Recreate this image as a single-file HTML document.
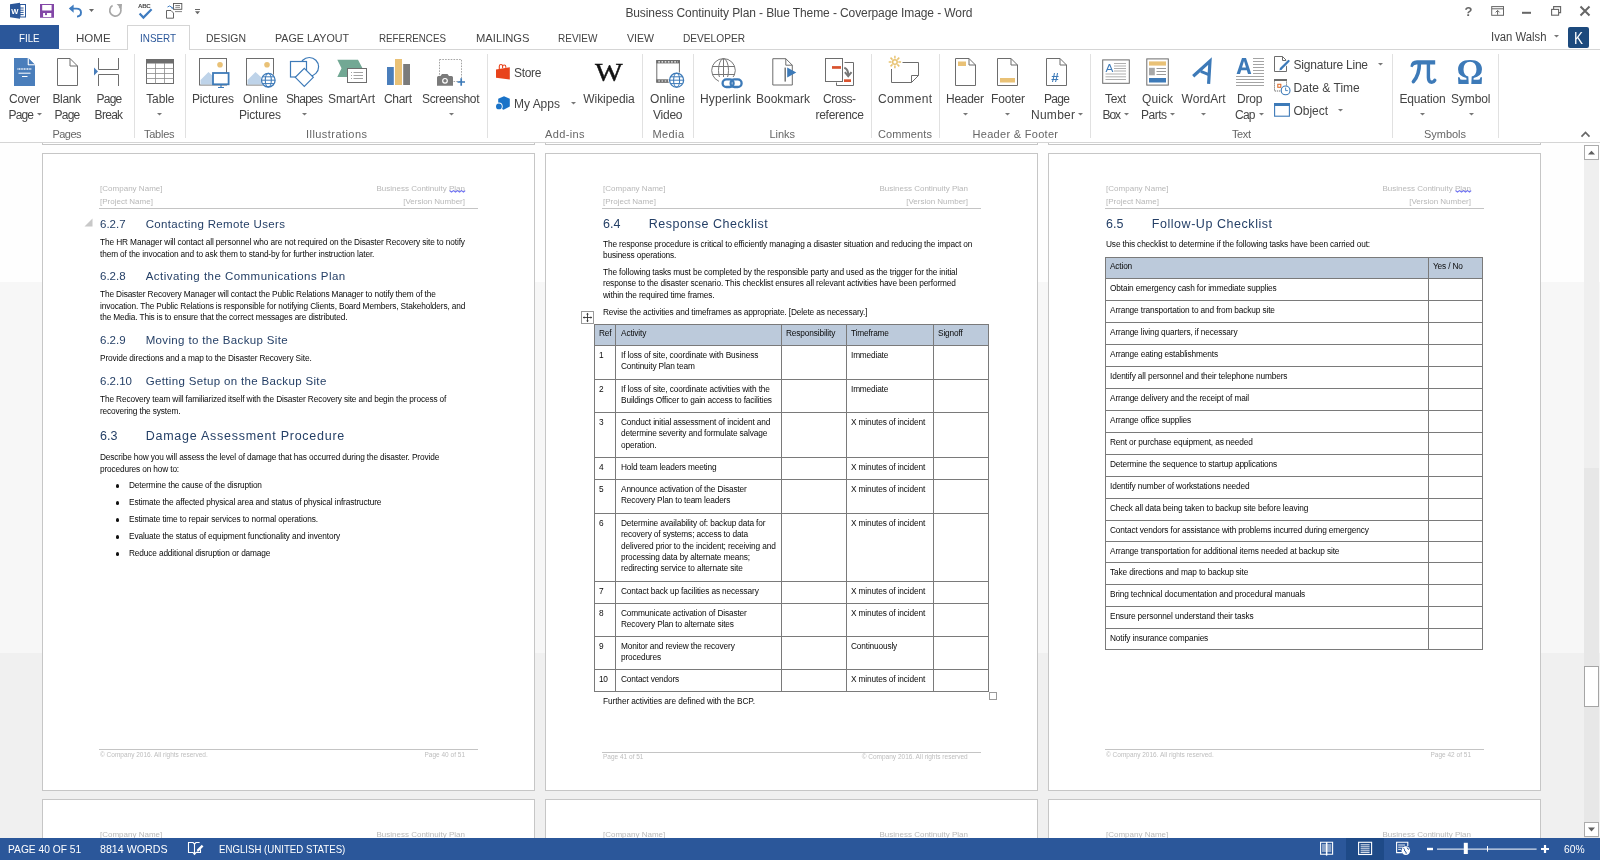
<!DOCTYPE html>
<html><head><meta charset="utf-8"><style>
html,body{margin:0;padding:0}
body{width:1600px;height:860px;position:relative;overflow:hidden;background:#fff;font-family:"Liberation Sans",sans-serif}
.t{position:absolute;white-space:pre;line-height:1;font-family:"Liberation Sans",sans-serif}
.b{position:absolute}
svg.b{overflow:visible}
</style></head><body><div id=root style="position:absolute;left:0;top:0;width:1600px;height:860px;will-change:transform">
<div class=t style="left:625.40px;top:7.00px;font-size:12px;color:#444444;letter-spacing:-0.098px;">Business Continuity Plan - Blue Theme - Coverpage Image - Word</div>
<div class=b style="left:0px;top:25px;width:59px;height:24px;background:#2b579a;"></div>
<div class=t style="left:19.40px;top:32.70px;font-size:11.5px;color:#ffffff;transform:scaleX(0.8482);transform-origin:0 0;">FILE</div>
<div class=t style="left:76.40px;top:32.70px;font-size:11.5px;color:#444444;transform:scaleX(1.0029);transform-origin:0 0;">HOME</div>
<div class=t style="left:206.00px;top:32.70px;font-size:11.5px;color:#444444;transform:scaleX(0.9072);transform-origin:0 0;">DESIGN</div>
<div class=t style="left:275.00px;top:32.70px;font-size:11.5px;color:#444444;transform:scaleX(0.9313);transform-origin:0 0;">PAGE LAYOUT</div>
<div class=t style="left:379.00px;top:32.70px;font-size:11.5px;color:#444444;transform:scaleX(0.8525);transform-origin:0 0;">REFERENCES</div>
<div class=t style="left:475.50px;top:32.70px;font-size:11.5px;color:#444444;transform:scaleX(0.9735);transform-origin:0 0;">MAILINGS</div>
<div class=t style="left:558.00px;top:32.70px;font-size:11.5px;color:#444444;transform:scaleX(0.8707);transform-origin:0 0;">REVIEW</div>
<div class=t style="left:627.00px;top:32.70px;font-size:11.5px;color:#444444;transform:scaleX(0.9187);transform-origin:0 0;">VIEW</div>
<div class=t style="left:683.00px;top:32.70px;font-size:11.5px;color:#444444;transform:scaleX(0.8819);transform-origin:0 0;">DEVELOPER</div>
<div class=b style="left:59px;top:49px;width:1541px;height:1px;background:#d5d5d5;"></div>
<div class=b style="left:127px;top:25px;width:63px;height:25px;background:#fff;border:1px solid #d5d5d5;border-bottom:none;box-sizing:border-box"></div>
<div class=t style="left:140.40px;top:32.70px;font-size:11.5px;color:#2b579a;transform:scaleX(0.8603);transform-origin:0 0;">INSERT</div>
<div class=t style="left:1490.80px;top:30.80px;font-size:12px;color:#444444;transform:scaleX(0.9421);transform-origin:0 0;">Ivan Walsh</div>
<svg class=b style="left:1554.10px;top:34.00px" width="5" height="3.5"><path d="M0 1 L5 1 L2.5 3.5 Z" fill="#777"/></svg>
<div class=b style="left:1567.6px;top:27px;width:21.3px;height:20.6px;background:#1d4a7d;border-radius:2px"></div>
<div class=t style="left:1573.70px;top:29.60px;font-size:16.5px;color:#ffffff;transform:scaleX(0.8178);transform-origin:0 0;">K</div>
<div class=b style="left:0px;top:142px;width:1600px;height:1px;background:#d5d5d5;"></div>
<div class=b style="left:134px;top:54px;width:1px;height:84px;background:#e1e1e1;"></div>
<div class=b style="left:185px;top:54px;width:1px;height:84px;background:#e1e1e1;"></div>
<div class=b style="left:487px;top:54px;width:1px;height:84px;background:#e1e1e1;"></div>
<div class=b style="left:642px;top:54px;width:1px;height:84px;background:#e1e1e1;"></div>
<div class=b style="left:693px;top:54px;width:1px;height:84px;background:#e1e1e1;"></div>
<div class=b style="left:871px;top:54px;width:1px;height:84px;background:#e1e1e1;"></div>
<div class=b style="left:939px;top:54px;width:1px;height:84px;background:#e1e1e1;"></div>
<div class=b style="left:1090px;top:54px;width:1px;height:84px;background:#e1e1e1;"></div>
<div class=b style="left:1392px;top:54px;width:1px;height:84px;background:#e1e1e1;"></div>
<div class=b style="left:1498px;top:54px;width:1px;height:84px;background:#e1e1e1;"></div>
<div class=t style="left:9.00px;top:93.00px;font-size:12px;color:#444444;letter-spacing:-0.252px;">Cover</div>
<div class=t style="left:8.50px;top:109.00px;font-size:12px;color:#444444;letter-spacing:-0.842px;">Page</div>
<svg class=b style="left:37.20px;top:112.00px" width="5" height="3.5"><path d="M0 1 L5 1 L2.5 3.5 Z" fill="#777777"/></svg>
<div class=t style="left:52.50px;top:93.00px;font-size:12px;color:#444444;letter-spacing:-0.379px;">Blank</div>
<div class=t style="left:54.60px;top:109.00px;font-size:12px;color:#444444;letter-spacing:-0.792px;">Page</div>
<div class=t style="left:96.50px;top:93.00px;font-size:12px;color:#444444;letter-spacing:-0.758px;">Page</div>
<div class=t style="left:94.60px;top:109.00px;font-size:12px;color:#444444;letter-spacing:-0.712px;">Break</div>
<div class=t style="left:146.25px;top:93.00px;font-size:12px;color:#444444;letter-spacing:-0.134px;">Table</div>
<svg class=b style="left:156.90px;top:112.00px" width="5" height="3.5"><path d="M0 1 L5 1 L2.5 3.5 Z" fill="#777777"/></svg>
<div class=t style="left:192.00px;top:93.00px;font-size:12px;color:#444444;letter-spacing:-0.193px;">Pictures</div>
<div class=t style="left:243.00px;top:93.00px;font-size:12px;color:#444444;letter-spacing:0.062px;">Online</div>
<div class=t style="left:239.00px;top:109.00px;font-size:12px;color:#444444;letter-spacing:-0.193px;">Pictures</div>
<div class=t style="left:286.00px;top:93.00px;font-size:12px;color:#444444;letter-spacing:-0.740px;">Shapes</div>
<svg class=b style="left:302.00px;top:112.00px" width="5" height="3.5"><path d="M0 1 L5 1 L2.5 3.5 Z" fill="#777777"/></svg>
<div class=t style="left:328.00px;top:93.00px;font-size:12px;color:#444444;letter-spacing:-0.048px;">SmartArt</div>
<div class=t style="left:384.00px;top:93.00px;font-size:12px;color:#444444;letter-spacing:-0.336px;">Chart</div>
<div class=t style="left:422.00px;top:93.00px;font-size:12px;color:#444444;letter-spacing:-0.356px;">Screenshot</div>
<svg class=b style="left:448.70px;top:112.00px" width="5" height="3.5"><path d="M0 1 L5 1 L2.5 3.5 Z" fill="#777777"/></svg>
<div class=t style="left:514.00px;top:66.90px;font-size:12px;color:#444444;letter-spacing:-0.345px;">Store</div>
<div class=t style="left:514.00px;top:97.70px;font-size:12px;color:#444444;letter-spacing:-0.014px;">My Apps</div>
<svg class=b style="left:571.00px;top:101.00px" width="5" height="3.5"><path d="M0 1 L5 1 L2.5 3.5 Z" fill="#777777"/></svg>
<div class=t style="left:583.30px;top:93.00px;font-size:12px;color:#444444;letter-spacing:-0.065px;">Wikipedia</div>
<div class=t style="left:650.00px;top:93.00px;font-size:12px;color:#444444;letter-spacing:0.062px;">Online</div>
<div class=t style="left:653.00px;top:109.00px;font-size:12px;color:#444444;letter-spacing:-0.244px;">Video</div>
<div class=t style="left:700.00px;top:93.00px;font-size:12px;color:#444444;letter-spacing:0.123px;">Hyperlink</div>
<div class=t style="left:756.00px;top:93.00px;font-size:12px;color:#444444;letter-spacing:-0.003px;">Bookmark</div>
<div class=t style="left:823.00px;top:93.00px;font-size:12px;color:#444444;letter-spacing:-0.466px;">Cross-</div>
<div class=t style="left:815.50px;top:109.00px;font-size:12px;color:#444444;letter-spacing:-0.274px;">reference</div>
<div class=t style="left:878.00px;top:93.00px;font-size:12px;color:#444444;letter-spacing:0.331px;">Comment</div>
<div class=t style="left:946.00px;top:93.00px;font-size:12px;color:#444444;letter-spacing:-0.271px;">Header</div>
<svg class=b style="left:962.50px;top:112.00px" width="5" height="3.5"><path d="M0 1 L5 1 L2.5 3.5 Z" fill="#777777"/></svg>
<div class=t style="left:991.00px;top:93.00px;font-size:12px;color:#444444;letter-spacing:-0.136px;">Footer</div>
<svg class=b style="left:1005.00px;top:112.00px" width="5" height="3.5"><path d="M0 1 L5 1 L2.5 3.5 Z" fill="#777777"/></svg>
<div class=t style="left:1044.00px;top:93.00px;font-size:12px;color:#444444;letter-spacing:-0.675px;">Page</div>
<div class=t style="left:1031.00px;top:109.00px;font-size:12px;color:#444444;letter-spacing:0.264px;">Number</div>
<svg class=b style="left:1077.70px;top:112.00px" width="5" height="3.5"><path d="M0 1 L5 1 L2.5 3.5 Z" fill="#777777"/></svg>
<div class=t style="left:1105.00px;top:93.00px;font-size:12px;color:#444444;letter-spacing:-0.336px;">Text</div>
<div class=t style="left:1102.50px;top:109.00px;font-size:12px;color:#444444;letter-spacing:-1.089px;">Box</div>
<svg class=b style="left:1124.00px;top:112.00px" width="5" height="3.5"><path d="M0 1 L5 1 L2.5 3.5 Z" fill="#777777"/></svg>
<div class=t style="left:1142.00px;top:93.00px;font-size:12px;color:#444444;letter-spacing:0.082px;">Quick</div>
<div class=t style="left:1141.00px;top:109.00px;font-size:12px;color:#444444;letter-spacing:-0.502px;">Parts</div>
<svg class=b style="left:1170.00px;top:112.00px" width="5" height="3.5"><path d="M0 1 L5 1 L2.5 3.5 Z" fill="#777777"/></svg>
<div class=t style="left:1181.60px;top:93.00px;font-size:12px;color:#444444;letter-spacing:0.035px;">WordArt</div>
<svg class=b style="left:1200.90px;top:112.00px" width="5" height="3.5"><path d="M0 1 L5 1 L2.5 3.5 Z" fill="#777777"/></svg>
<div class=t style="left:1237.00px;top:93.00px;font-size:12px;color:#444444;letter-spacing:-0.170px;">Drop</div>
<div class=t style="left:1235.00px;top:109.00px;font-size:12px;color:#444444;letter-spacing:-0.757px;">Cap</div>
<svg class=b style="left:1259.00px;top:112.00px" width="5" height="3.5"><path d="M0 1 L5 1 L2.5 3.5 Z" fill="#777777"/></svg>
<div class=t style="left:1293.60px;top:59.00px;font-size:12px;color:#444444;letter-spacing:-0.230px;">Signature Line</div>
<svg class=b style="left:1377.50px;top:62.00px" width="5" height="3.5"><path d="M0 1 L5 1 L2.5 3.5 Z" fill="#777777"/></svg>
<div class=t style="left:1293.60px;top:82.00px;font-size:12px;color:#444444;letter-spacing:0.016px;">Date &amp; Time</div>
<div class=t style="left:1293.60px;top:105.00px;font-size:12px;color:#444444;letter-spacing:-0.056px;">Object</div>
<svg class=b style="left:1338.00px;top:107.50px" width="5" height="3.5"><path d="M0 1 L5 1 L2.5 3.5 Z" fill="#777777"/></svg>
<div class=t style="left:1399.40px;top:93.00px;font-size:12px;color:#444444;letter-spacing:-0.168px;">Equation</div>
<svg class=b style="left:1419.50px;top:112.00px" width="5" height="3.5"><path d="M0 1 L5 1 L2.5 3.5 Z" fill="#777777"/></svg>
<div class=t style="left:1451.00px;top:93.00px;font-size:12px;color:#444444;letter-spacing:-0.123px;">Symbol</div>
<svg class=b style="left:1468.50px;top:112.00px" width="5" height="3.5"><path d="M0 1 L5 1 L2.5 3.5 Z" fill="#777777"/></svg>
<div class=t style="left:52.50px;top:129.00px;font-size:11px;color:#666666;letter-spacing:-0.547px;">Pages</div>
<div class=t style="left:144.00px;top:129.00px;font-size:11px;color:#666666;letter-spacing:-0.259px;">Tables</div>
<div class=t style="left:306.00px;top:129.00px;font-size:11px;color:#666666;letter-spacing:0.447px;">Illustrations</div>
<div class=t style="left:545.00px;top:129.00px;font-size:11px;color:#666666;letter-spacing:0.367px;">Add-ins</div>
<div class=t style="left:652.50px;top:129.00px;font-size:11px;color:#666666;letter-spacing:0.385px;">Media</div>
<div class=t style="left:769.50px;top:129.00px;font-size:11px;color:#666666;letter-spacing:-0.045px;">Links</div>
<div class=t style="left:878.00px;top:129.00px;font-size:11px;color:#666666;letter-spacing:0.117px;">Comments</div>
<div class=t style="left:972.50px;top:129.00px;font-size:11px;color:#666666;letter-spacing:0.299px;">Header &amp; Footer</div>
<div class=t style="left:1232.00px;top:129.00px;font-size:11px;color:#666666;letter-spacing:-0.391px;">Text</div>
<div class=t style="left:1424.00px;top:129.00px;font-size:11px;color:#666666;letter-spacing:-0.030px;">Symbols</div>
<div class=b style="left:0px;top:143px;width:1600px;height:139px;background:#fefefe;"></div>
<div class=b style="left:0px;top:282px;width:1600px;height:371px;background:#f7f7f7;"></div>
<div class=b style="left:0px;top:653px;width:1600px;height:185px;background:#f0f0f0;"></div>
<div class=b style="left:1584px;top:145px;width:15px;height:323px;background:#efefef;"></div>
<div class=b style="left:1584px;top:468px;width:15px;height:370px;background:#e7e7e7;"></div>
<div class=b style="left:42px;top:143px;width:493px;height:2px;background:#fff;border:1px solid #c6c6c6;border-top:none;box-sizing:border-box"></div>
<div class=b style="left:42px;top:153px;width:493px;height:638px;background:#fff;border:1px solid #c6c6c6;box-sizing:border-box"></div>
<div class=b style="left:42px;top:799px;width:493px;height:60px;background:#fff;border:1px solid #c6c6c6;border-bottom:none;box-sizing:border-box"></div>
<div class=b style="left:545px;top:143px;width:493px;height:2px;background:#fff;border:1px solid #c6c6c6;border-top:none;box-sizing:border-box"></div>
<div class=b style="left:545px;top:153px;width:493px;height:638px;background:#fff;border:1px solid #c6c6c6;box-sizing:border-box"></div>
<div class=b style="left:545px;top:799px;width:493px;height:60px;background:#fff;border:1px solid #c6c6c6;border-bottom:none;box-sizing:border-box"></div>
<div class=b style="left:1048px;top:143px;width:493px;height:2px;background:#fff;border:1px solid #c6c6c6;border-top:none;box-sizing:border-box"></div>
<div class=b style="left:1048px;top:153px;width:493px;height:638px;background:#fff;border:1px solid #c6c6c6;box-sizing:border-box"></div>
<div class=b style="left:1048px;top:799px;width:493px;height:60px;background:#fff;border:1px solid #c6c6c6;border-bottom:none;box-sizing:border-box"></div>
<div class=t style="left:100.00px;top:185.00px;font-size:8px;color:#b8b8b8;letter-spacing:0.020px;">[Company Name]</div>
<div class=t style="left:100.00px;top:198.00px;font-size:8px;color:#b8b8b8;">[Project Name]</div>
<div class=t style="left:376.50px;top:185.00px;font-size:8px;color:#b8b8b8;">Business Continuity Plan</div>
<div class=t style="left:403.20px;top:198.00px;font-size:8px;color:#b8b8b8;">[Version Number]</div>
<div class=b style="left:99px;top:208px;width:379px;height:1px;background:#c4c4c4;"></div>
<svg class=b style="left:449px;top:190.2px" width="17" height="3"><path d="M0.5 0.6 L2.5 2 L4.5 0.6 L6.5 2 L8.5 0.6 L10.5 2 L12.5 0.6 L14.5 2 L16.2 0.6" stroke="#6f72f2" stroke-width="1.1" fill="none"/></svg>
<svg class=b style="left:84px;top:218px" width="9" height="9"><path d="M8.5 0.5 L8.5 8.5 L0.5 8.5 Z" fill="#c8c8c8"/></svg>
<div class=t style="left:100.00px;top:219.00px;font-size:11.5px;color:#243f66;">6.2.7</div>
<div class=t style="left:145.70px;top:219.00px;font-size:11.5px;color:#243f66;letter-spacing:0.347px;">Contacting Remote Users</div>
<div class=t style="left:100.00px;top:238.00px;font-size:8.3px;color:#0a0a0a;letter-spacing:-0.112px;">The HR Manager will contact all personnel who are not required on the Disaster Recovery site to notify</div>
<div class=t style="left:100.00px;top:250.00px;font-size:8.3px;color:#0a0a0a;letter-spacing:-0.127px;">them of the invocation and to ask them to stand-by for further instruction later.</div>
<div class=t style="left:100.00px;top:271.00px;font-size:11.5px;color:#243f66;">6.2.8</div>
<div class=t style="left:145.70px;top:271.00px;font-size:11.5px;color:#243f66;letter-spacing:0.467px;">Activating the Communications Plan</div>
<div class=t style="left:100.00px;top:290.00px;font-size:8.3px;color:#0a0a0a;letter-spacing:-0.135px;">The Disaster Recovery Manager will contact the Public Relations Manager to notify them of the</div>
<div class=t style="left:100.00px;top:302.00px;font-size:8.3px;color:#0a0a0a;letter-spacing:-0.133px;">invocation. The Public Relations is responsible for notifying Clients, Board Members, Stakeholders, and</div>
<div class=t style="left:100.00px;top:313.00px;font-size:8.3px;color:#0a0a0a;letter-spacing:-0.131px;">the Media. This is to ensure that the correct messages are distributed.</div>
<div class=t style="left:100.00px;top:335.00px;font-size:11.5px;color:#243f66;">6.2.9</div>
<div class=t style="left:145.70px;top:335.00px;font-size:11.5px;color:#243f66;letter-spacing:0.350px;">Moving to the Backup Site</div>
<div class=t style="left:100.00px;top:354.00px;font-size:8.3px;color:#0a0a0a;letter-spacing:-0.135px;">Provide directions and a map to the Disaster Recovery Site.</div>
<div class=t style="left:100.00px;top:376.00px;font-size:11.5px;color:#243f66;">6.2.10</div>
<div class=t style="left:145.70px;top:376.00px;font-size:11.5px;color:#243f66;letter-spacing:0.340px;">Getting Setup on the Backup Site</div>
<div class=t style="left:100.00px;top:395.00px;font-size:8.3px;color:#0a0a0a;letter-spacing:-0.131px;">The Recovery team will familiarized itself with the Disaster Recovery site and begin the process of</div>
<div class=t style="left:100.00px;top:407.00px;font-size:8.3px;color:#0a0a0a;letter-spacing:-0.142px;">recovering the system.</div>
<div class=t style="left:100.00px;top:430.00px;font-size:12.5px;color:#243f66;">6.3</div>
<div class=t style="left:145.70px;top:430.00px;font-size:12.5px;color:#243f66;letter-spacing:0.744px;">Damage Assessment Procedure</div>
<div class=t style="left:100.00px;top:453.00px;font-size:8.3px;color:#0a0a0a;letter-spacing:-0.134px;">Describe how you will assess the level of damage that has occurred during the disaster. Provide</div>
<div class=t style="left:100.00px;top:465.00px;font-size:8.3px;color:#0a0a0a;letter-spacing:-0.147px;">procedures on how to:</div>
<div class=b style="left:115.6px;top:484.4px;width:3.2px;height:3.2px;border-radius:50%;background:#111"></div>
<div class=t style="left:129.00px;top:481.00px;font-size:8.3px;color:#0a0a0a;letter-spacing:-0.137px;">Determine the cause of the disruption</div>
<div class=b style="left:115.6px;top:501.4px;width:3.2px;height:3.2px;border-radius:50%;background:#111"></div>
<div class=t style="left:129.00px;top:498.00px;font-size:8.3px;color:#0a0a0a;letter-spacing:-0.130px;">Estimate the affected physical area and status of physical infrastructure</div>
<div class=b style="left:115.6px;top:518.4px;width:3.2px;height:3.2px;border-radius:50%;background:#111"></div>
<div class=t style="left:129.00px;top:515.00px;font-size:8.3px;color:#0a0a0a;letter-spacing:-0.132px;">Estimate time to repair services to normal operations.</div>
<div class=b style="left:115.6px;top:535.4px;width:3.2px;height:3.2px;border-radius:50%;background:#111"></div>
<div class=t style="left:129.00px;top:532.00px;font-size:8.3px;color:#0a0a0a;letter-spacing:-0.133px;">Evaluate the status of equipment functionality and inventory</div>
<div class=b style="left:115.6px;top:552.4px;width:3.2px;height:3.2px;border-radius:50%;background:#111"></div>
<div class=t style="left:129.00px;top:549.00px;font-size:8.3px;color:#0a0a0a;letter-spacing:-0.142px;">Reduce additional disruption or damage</div>
<div class=b style="left:99px;top:749px;width:379px;height:1px;background:#c4c4c4;"></div>
<div class=t style="left:100.00px;top:752.00px;font-size:6.5px;color:#bdbdbd;">© Company 2016. All rights reserved.</div>
<div class=t style="left:424.52px;top:752.00px;font-size:6.5px;color:#bdbdbd;">Page 40 of 51</div>
<div class=t style="left:603.00px;top:185.00px;font-size:8px;color:#b8b8b8;letter-spacing:0.020px;">[Company Name]</div>
<div class=t style="left:603.00px;top:198.00px;font-size:8px;color:#b8b8b8;">[Project Name]</div>
<div class=t style="left:879.50px;top:185.00px;font-size:8px;color:#b8b8b8;">Business Continuity Plan</div>
<div class=t style="left:906.20px;top:198.00px;font-size:8px;color:#b8b8b8;">[Version Number]</div>
<div class=b style="left:602px;top:208px;width:379px;height:1px;background:#c4c4c4;"></div>
<div class=t style="left:603.00px;top:218.00px;font-size:12.5px;color:#243f66;">6.4</div>
<div class=t style="left:648.70px;top:218.00px;font-size:12.5px;color:#243f66;letter-spacing:0.502px;">Response Checklist</div>
<div class=t style="left:603.00px;top:240.00px;font-size:8.3px;color:#0a0a0a;letter-spacing:-0.131px;">The response procedure is critical to efficiently managing a disaster situation and reducing the impact on</div>
<div class=t style="left:603.00px;top:251.00px;font-size:8.3px;color:#0a0a0a;letter-spacing:-0.143px;">business operations.</div>
<div class=t style="left:603.00px;top:268.00px;font-size:8.3px;color:#0a0a0a;letter-spacing:-0.130px;">The following tasks must be completed by the responsible party and used as the trigger for the initial</div>
<div class=t style="left:603.00px;top:279.00px;font-size:8.3px;color:#0a0a0a;letter-spacing:-0.131px;">response to the disaster scenario. This checklist ensures all relevant activities have been performed</div>
<div class=t style="left:603.00px;top:291.00px;font-size:8.3px;color:#0a0a0a;letter-spacing:-0.134px;">within the required time frames.</div>
<div class=t style="left:603.00px;top:308.00px;font-size:8.3px;color:#0a0a0a;letter-spacing:-0.133px;">Revise the activities and timeframes as appropriate. [Delete as necessary.]</div>
<div class=b style="left:581px;top:311px;width:13px;height:13px;border:1px solid #9a9a9a;box-sizing:border-box;background:#fff"></div>
<svg class=b style="left:581px;top:311px" width="13" height="13"><path d="M6.5 2.5 V10.5 M2.5 6.5 H10.5" stroke="#333" stroke-width="0.9"/><path d="M6.5 1.8 L5.2 3.4 H7.8Z M6.5 11.2 L5.2 9.6 H7.8Z M1.8 6.5 L3.4 5.2 V7.8Z M11.2 6.5 L9.6 5.2 V7.8Z" fill="#333"/></svg>
<div class=b style="left:594px;top:325px;width:394px;height:20px;background:#bccadb;"></div>
<div class=b style="left:594px;top:324px;width:1px;height:368px;background:#7a7a7a;"></div>
<div class=b style="left:615px;top:324px;width:1px;height:368px;background:#7a7a7a;"></div>
<div class=b style="left:781px;top:324px;width:1px;height:368px;background:#7a7a7a;"></div>
<div class=b style="left:846px;top:324px;width:1px;height:368px;background:#7a7a7a;"></div>
<div class=b style="left:933px;top:324px;width:1px;height:368px;background:#7a7a7a;"></div>
<div class=b style="left:988px;top:324px;width:1px;height:368px;background:#7a7a7a;"></div>
<div class=b style="left:594px;top:324px;width:395px;height:1px;background:#7a7a7a;"></div>
<div class=b style="left:594px;top:345px;width:395px;height:1px;background:#7a7a7a;"></div>
<div class=b style="left:594px;top:379px;width:395px;height:1px;background:#7a7a7a;"></div>
<div class=b style="left:594px;top:412px;width:395px;height:1px;background:#7a7a7a;"></div>
<div class=b style="left:594px;top:457px;width:395px;height:1px;background:#7a7a7a;"></div>
<div class=b style="left:594px;top:479px;width:395px;height:1px;background:#7a7a7a;"></div>
<div class=b style="left:594px;top:513px;width:395px;height:1px;background:#7a7a7a;"></div>
<div class=b style="left:594px;top:581px;width:395px;height:1px;background:#7a7a7a;"></div>
<div class=b style="left:594px;top:603px;width:395px;height:1px;background:#7a7a7a;"></div>
<div class=b style="left:594px;top:636px;width:395px;height:1px;background:#7a7a7a;"></div>
<div class=b style="left:594px;top:669px;width:395px;height:1px;background:#7a7a7a;"></div>
<div class=b style="left:594px;top:691px;width:395px;height:1px;background:#7a7a7a;"></div>
<div class=t style="left:599.00px;top:329.00px;font-size:8.3px;color:#0a0a0a;letter-spacing:-0.231px;">Ref</div>
<div class=t style="left:621.00px;top:329.00px;font-size:8.3px;color:#0a0a0a;letter-spacing:-0.134px;">Activity</div>
<div class=t style="left:786.00px;top:329.00px;font-size:8.3px;color:#0a0a0a;letter-spacing:-0.141px;">Responsibility</div>
<div class=t style="left:851.00px;top:329.00px;font-size:8.3px;color:#0a0a0a;letter-spacing:-0.176px;">Timeframe</div>
<div class=t style="left:938.00px;top:329.00px;font-size:8.3px;color:#0a0a0a;letter-spacing:-0.153px;">Signoff</div>
<div class=t style="left:599.00px;top:351.00px;font-size:8.3px;color:#0a0a0a;">1</div>
<div class=t style="left:621.00px;top:351.00px;font-size:8.3px;color:#0a0a0a;letter-spacing:-0.127px;">If loss of site, coordinate with Business</div>
<div class=t style="left:621.00px;top:362.00px;font-size:8.3px;color:#0a0a0a;letter-spacing:-0.144px;">Continuity Plan team</div>
<div class=t style="left:851.00px;top:351.00px;font-size:8.3px;color:#0a0a0a;letter-spacing:-0.173px;">Immediate</div>
<div class=t style="left:599.00px;top:385.00px;font-size:8.3px;color:#0a0a0a;">2</div>
<div class=t style="left:621.00px;top:385.00px;font-size:8.3px;color:#0a0a0a;letter-spacing:-0.120px;">If loss of site, coordinate activities with the</div>
<div class=t style="left:621.00px;top:396.00px;font-size:8.3px;color:#0a0a0a;letter-spacing:-0.125px;">Buildings Officer to gain access to facilities</div>
<div class=t style="left:851.00px;top:385.00px;font-size:8.3px;color:#0a0a0a;letter-spacing:-0.173px;">Immediate</div>
<div class=t style="left:599.00px;top:418.00px;font-size:8.3px;color:#0a0a0a;">3</div>
<div class=t style="left:621.00px;top:418.00px;font-size:8.3px;color:#0a0a0a;letter-spacing:-0.135px;">Conduct initial assessment of incident and</div>
<div class=t style="left:621.00px;top:429.00px;font-size:8.3px;color:#0a0a0a;letter-spacing:-0.139px;">determine severity and formulate salvage</div>
<div class=t style="left:621.00px;top:441.00px;font-size:8.3px;color:#0a0a0a;letter-spacing:-0.147px;">operation.</div>
<div class=t style="left:851.00px;top:418.00px;font-size:8.3px;color:#0a0a0a;letter-spacing:-0.138px;">X minutes of incident</div>
<div class=t style="left:599.00px;top:463.00px;font-size:8.3px;color:#0a0a0a;">4</div>
<div class=t style="left:621.00px;top:463.00px;font-size:8.3px;color:#0a0a0a;letter-spacing:-0.148px;">Hold team leaders meeting</div>
<div class=t style="left:851.00px;top:463.00px;font-size:8.3px;color:#0a0a0a;letter-spacing:-0.138px;">X minutes of incident</div>
<div class=t style="left:599.00px;top:485.00px;font-size:8.3px;color:#0a0a0a;">5</div>
<div class=t style="left:621.00px;top:485.00px;font-size:8.3px;color:#0a0a0a;letter-spacing:-0.137px;">Announce activation of the Disaster</div>
<div class=t style="left:621.00px;top:496.00px;font-size:8.3px;color:#0a0a0a;letter-spacing:-0.145px;">Recovery Plan to team leaders</div>
<div class=t style="left:851.00px;top:485.00px;font-size:8.3px;color:#0a0a0a;letter-spacing:-0.138px;">X minutes of incident</div>
<div class=t style="left:599.00px;top:519.00px;font-size:8.3px;color:#0a0a0a;">6</div>
<div class=t style="left:621.00px;top:519.00px;font-size:8.3px;color:#0a0a0a;letter-spacing:-0.131px;">Determine availability of: backup data for</div>
<div class=t style="left:621.00px;top:530.00px;font-size:8.3px;color:#0a0a0a;letter-spacing:-0.139px;">recovery of systems; access to data</div>
<div class=t style="left:621.00px;top:542.00px;font-size:8.3px;color:#0a0a0a;letter-spacing:-0.128px;">delivered prior to the incident; receiving and</div>
<div class=t style="left:621.00px;top:553.00px;font-size:8.3px;color:#0a0a0a;letter-spacing:-0.141px;">processing data by alternate means;</div>
<div class=t style="left:621.00px;top:564.00px;font-size:8.3px;color:#0a0a0a;letter-spacing:-0.126px;">redirecting service to alternate site</div>
<div class=t style="left:851.00px;top:519.00px;font-size:8.3px;color:#0a0a0a;letter-spacing:-0.138px;">X minutes of incident</div>
<div class=t style="left:599.00px;top:587.00px;font-size:8.3px;color:#0a0a0a;">7</div>
<div class=t style="left:621.00px;top:587.00px;font-size:8.3px;color:#0a0a0a;letter-spacing:-0.135px;">Contact back up facilities as necessary</div>
<div class=t style="left:851.00px;top:587.00px;font-size:8.3px;color:#0a0a0a;letter-spacing:-0.138px;">X minutes of incident</div>
<div class=t style="left:599.00px;top:609.00px;font-size:8.3px;color:#0a0a0a;">8</div>
<div class=t style="left:621.00px;top:609.00px;font-size:8.3px;color:#0a0a0a;letter-spacing:-0.142px;">Communicate activation of Disaster</div>
<div class=t style="left:621.00px;top:620.00px;font-size:8.3px;color:#0a0a0a;letter-spacing:-0.135px;">Recovery Plan to alternate sites</div>
<div class=t style="left:851.00px;top:609.00px;font-size:8.3px;color:#0a0a0a;letter-spacing:-0.138px;">X minutes of incident</div>
<div class=t style="left:599.00px;top:642.00px;font-size:8.3px;color:#0a0a0a;">9</div>
<div class=t style="left:621.00px;top:642.00px;font-size:8.3px;color:#0a0a0a;letter-spacing:-0.141px;">Monitor and review the recovery</div>
<div class=t style="left:621.00px;top:653.00px;font-size:8.3px;color:#0a0a0a;letter-spacing:-0.165px;">procedures</div>
<div class=t style="left:851.00px;top:642.00px;font-size:8.3px;color:#0a0a0a;letter-spacing:-0.156px;">Continuously</div>
<div class=t style="left:599.00px;top:675.00px;font-size:8.3px;color:#0a0a0a;letter-spacing:-0.330px;">10</div>
<div class=t style="left:621.00px;top:675.00px;font-size:8.3px;color:#0a0a0a;letter-spacing:-0.154px;">Contact vendors</div>
<div class=t style="left:851.00px;top:675.00px;font-size:8.3px;color:#0a0a0a;letter-spacing:-0.138px;">X minutes of incident</div>
<div class=b style="left:989px;top:692px;width:8px;height:8px;border:1px solid #9a9a9a;box-sizing:border-box;background:#fff"></div>
<div class=t style="left:603.00px;top:697.00px;font-size:8.3px;color:#0a0a0a;letter-spacing:-0.097px;">Further activities are defined with the BCP.</div>
<div class=b style="left:602px;top:752px;width:379px;height:1px;background:#c4c4c4;"></div>
<div class=t style="left:603.00px;top:754.00px;font-size:6.5px;color:#bdbdbd;">Page 41 of 51</div>
<div class=t style="left:861.69px;top:754.00px;font-size:6.5px;color:#bdbdbd;">© Company 2016. All rights reserved</div>
<div class=t style="left:1106.00px;top:185.00px;font-size:8px;color:#b8b8b8;letter-spacing:0.020px;">[Company Name]</div>
<div class=t style="left:1106.00px;top:198.00px;font-size:8px;color:#b8b8b8;">[Project Name]</div>
<div class=t style="left:1382.50px;top:185.00px;font-size:8px;color:#b8b8b8;">Business Continuity Plan</div>
<div class=t style="left:1409.20px;top:198.00px;font-size:8px;color:#b8b8b8;">[Version Number]</div>
<div class=b style="left:1105px;top:208px;width:379px;height:1px;background:#c4c4c4;"></div>
<svg class=b style="left:1455px;top:190.2px" width="17" height="3"><path d="M0.5 0.6 L2.5 2 L4.5 0.6 L6.5 2 L8.5 0.6 L10.5 2 L12.5 0.6 L14.5 2 L16.2 0.6" stroke="#6f72f2" stroke-width="1.1" fill="none"/></svg>
<div class=t style="left:1106.00px;top:218.00px;font-size:12.5px;color:#243f66;">6.5</div>
<div class=t style="left:1151.70px;top:218.00px;font-size:12.5px;color:#243f66;letter-spacing:0.553px;">Follow-Up Checklist</div>
<div class=t style="left:1106.00px;top:240.00px;font-size:8.3px;color:#0a0a0a;letter-spacing:-0.129px;">Use this checklist to determine if the following tasks have been carried out:</div>
<div class=b style="left:1105px;top:257px;width:378px;height:21px;background:#bccadb;"></div>
<div class=b style="left:1105px;top:257px;width:378px;height:1px;background:#7a7a7a;"></div>
<div class=b style="left:1105px;top:278px;width:378px;height:1px;background:#7a7a7a;"></div>
<div class=b style="left:1105px;top:300px;width:378px;height:1px;background:#7a7a7a;"></div>
<div class=b style="left:1105px;top:322px;width:378px;height:1px;background:#7a7a7a;"></div>
<div class=b style="left:1105px;top:344px;width:378px;height:1px;background:#7a7a7a;"></div>
<div class=b style="left:1105px;top:366px;width:378px;height:1px;background:#7a7a7a;"></div>
<div class=b style="left:1105px;top:388px;width:378px;height:1px;background:#7a7a7a;"></div>
<div class=b style="left:1105px;top:410px;width:378px;height:1px;background:#7a7a7a;"></div>
<div class=b style="left:1105px;top:432px;width:378px;height:1px;background:#7a7a7a;"></div>
<div class=b style="left:1105px;top:454px;width:378px;height:1px;background:#7a7a7a;"></div>
<div class=b style="left:1105px;top:476px;width:378px;height:1px;background:#7a7a7a;"></div>
<div class=b style="left:1105px;top:498px;width:378px;height:1px;background:#7a7a7a;"></div>
<div class=b style="left:1105px;top:520px;width:378px;height:1px;background:#7a7a7a;"></div>
<div class=b style="left:1105px;top:541px;width:378px;height:1px;background:#7a7a7a;"></div>
<div class=b style="left:1105px;top:562px;width:378px;height:1px;background:#7a7a7a;"></div>
<div class=b style="left:1105px;top:584px;width:378px;height:1px;background:#7a7a7a;"></div>
<div class=b style="left:1105px;top:606px;width:378px;height:1px;background:#7a7a7a;"></div>
<div class=b style="left:1105px;top:628px;width:378px;height:1px;background:#7a7a7a;"></div>
<div class=b style="left:1105px;top:649px;width:378px;height:1px;background:#7a7a7a;"></div>
<div class=b style="left:1105px;top:257px;width:1px;height:393px;background:#7a7a7a;"></div>
<div class=b style="left:1428px;top:257px;width:1px;height:393px;background:#7a7a7a;"></div>
<div class=b style="left:1482px;top:257px;width:1px;height:393px;background:#7a7a7a;"></div>
<div class=t style="left:1110.00px;top:262.00px;font-size:8.3px;color:#0a0a0a;letter-spacing:-0.165px;">Action</div>
<div class=t style="left:1433.00px;top:262.00px;font-size:8.3px;color:#0a0a0a;letter-spacing:-0.159px;">Yes / No</div>
<div class=t style="left:1110.00px;top:284.00px;font-size:8.3px;color:#0a0a0a;letter-spacing:-0.144px;">Obtain emergency cash for immediate supplies</div>
<div class=t style="left:1110.00px;top:306.00px;font-size:8.3px;color:#0a0a0a;letter-spacing:-0.136px;">Arrange transportation to and from backup site</div>
<div class=t style="left:1110.00px;top:328.00px;font-size:8.3px;color:#0a0a0a;letter-spacing:-0.132px;">Arrange living quarters, if necessary</div>
<div class=t style="left:1110.00px;top:350.00px;font-size:8.3px;color:#0a0a0a;letter-spacing:-0.143px;">Arrange eating establishments</div>
<div class=t style="left:1110.00px;top:372.00px;font-size:8.3px;color:#0a0a0a;letter-spacing:-0.134px;">Identify all personnel and their telephone numbers</div>
<div class=t style="left:1110.00px;top:394.00px;font-size:8.3px;color:#0a0a0a;letter-spacing:-0.132px;">Arrange delivery and the receipt of mail</div>
<div class=t style="left:1110.00px;top:416.00px;font-size:8.3px;color:#0a0a0a;letter-spacing:-0.137px;">Arrange office supplies</div>
<div class=t style="left:1110.00px;top:438.00px;font-size:8.3px;color:#0a0a0a;letter-spacing:-0.147px;">Rent or purchase equipment, as needed</div>
<div class=t style="left:1110.00px;top:460.00px;font-size:8.3px;color:#0a0a0a;letter-spacing:-0.138px;">Determine the sequence to startup applications</div>
<div class=t style="left:1110.00px;top:482.00px;font-size:8.3px;color:#0a0a0a;letter-spacing:-0.140px;">Identify number of workstations needed</div>
<div class=t style="left:1110.00px;top:504.00px;font-size:8.3px;color:#0a0a0a;letter-spacing:-0.134px;">Check all data being taken to backup site before leaving</div>
<div class=t style="left:1110.00px;top:526.00px;font-size:8.3px;color:#0a0a0a;letter-spacing:-0.139px;">Contact vendors for assistance with problems incurred during emergency</div>
<div class=t style="left:1110.00px;top:547.00px;font-size:8.3px;color:#0a0a0a;letter-spacing:-0.133px;">Arrange transportation for additional items needed at backup site</div>
<div class=t style="left:1110.00px;top:568.00px;font-size:8.3px;color:#0a0a0a;letter-spacing:-0.139px;">Take directions and map to backup site</div>
<div class=t style="left:1110.00px;top:590.00px;font-size:8.3px;color:#0a0a0a;letter-spacing:-0.142px;">Bring technical documentation and procedural manuals</div>
<div class=t style="left:1110.00px;top:612.00px;font-size:8.3px;color:#0a0a0a;letter-spacing:-0.140px;">Ensure personnel understand their tasks</div>
<div class=t style="left:1110.00px;top:634.00px;font-size:8.3px;color:#0a0a0a;letter-spacing:-0.146px;">Notify insurance companies</div>
<div class=b style="left:1105px;top:749px;width:379px;height:1px;background:#c4c4c4;"></div>
<div class=t style="left:1106.00px;top:752.00px;font-size:6.5px;color:#bdbdbd;">© Company 2016. All rights reserved.</div>
<div class=t style="left:1430.52px;top:752.00px;font-size:6.5px;color:#bdbdbd;">Page 42 of 51</div>
<div class=t style="left:100.00px;top:831.00px;font-size:8px;color:#b8b8b8;">[Company Name]</div>
<div class=t style="left:376.51px;top:831.00px;font-size:8px;color:#b8b8b8;">Business Continuity Plan</div>
<div class=t style="left:603.00px;top:831.00px;font-size:8px;color:#b8b8b8;">[Company Name]</div>
<div class=t style="left:879.51px;top:831.00px;font-size:8px;color:#b8b8b8;">Business Continuity Plan</div>
<div class=t style="left:1106.00px;top:831.00px;font-size:8px;color:#b8b8b8;">[Company Name]</div>
<div class=t style="left:1382.51px;top:831.00px;font-size:8px;color:#b8b8b8;">Business Continuity Plan</div>
<svg class=b style="left:0;top:0" width="1600" height="143"><path d="M10 4.3 L20 2.8 L20 18.8 L10 17.3 Z" fill="#2b579a"/><rect x="20" y="4.5" width="5.5" height="12.5" fill="#fff" stroke="#2b579a" stroke-width="1"/><rect x="20" y="7.5" width="3.6" height="1" fill="#2b579a"/><rect x="20" y="9.7" width="3.6" height="1" fill="#2b579a"/><rect x="20" y="11.9" width="3.6" height="1" fill="#2b579a"/><rect x="20" y="14.1" width="3.6" height="1" fill="#2b579a"/><text x="11.3" y="14.2" font-family="Liberation Sans" font-weight="bold" font-size="7.6" fill="#fff">W</text><path d="M40 4 H54 V17.8 H40 Z M42.2 5 V10 Q42.2 10.6 42.8 10.6 H51 Q51.6 10.6 51.6 10 V5 Z M43.1 13.1 V16.9 H51.3 V13.1 Z" fill="#8347a7" fill-rule="evenodd"/><rect x="45" y="13.1" width="2" height="2" fill="#8347a7"/><path d="M70.5 8.6 H76.5 Q81 8.6 81 12.6 Q81 16.4 77 16.6" stroke="#3f7cc0" stroke-width="1.9" fill="none"/><path d="M68.8 8.6 L73.6 4.4 L73.6 12.8 Z" fill="#3f7cc0"/><path d="M89 9 H94 L91.5 11.9 Z" fill="#666"/><path d="M112.6 5.6 A5.6 5.6 0 1 0 119.2 6.4" stroke="#a8a8a8" stroke-width="1.7" fill="none"/><path d="M116.6 3.9 L122 3.9 L121.6 9.3 Z" fill="#a8a8a8"/><text x="138" y="7.8" font-family="Liberation Sans" font-weight="bold" font-size="6.2" fill="#444" letter-spacing="-0.3">ABC</text><path d="M139.6 13.6 L143.4 17.6 L151.6 9.3" stroke="#3f7cc0" stroke-width="2.2" fill="none"/><path d="M166.5 10.5 H171 L173.5 13 V18.2 H166.5 Z" fill="#fff" stroke="#555" stroke-width="0.9"/><rect x="173.5" y="3.5" width="8.3" height="5.8" fill="#fff" stroke="#555" stroke-width="0.9"/><path d="M175.3 5.5 H180 M175.3 7.3 H180 M175 11.6 H182" stroke="#666" stroke-width="0.8"/><path d="M167.5 7 Q169.5 4.6 172 7.6" stroke="#3f7cc0" stroke-width="1" fill="none"/><path d="M171 7.4 L173.5 7.2 L172.3 9.2Z" fill="#3f7cc0"/><rect x="195" y="9" width="5" height="1" fill="#666"/><path d="M195 11.2 H200 L197.5 14.3 Z" fill="#666"/><text x="1464.4" y="16" font-family="Liberation Sans" font-weight="bold" font-size="13" fill="#666">?</text><rect x="1491.7" y="6.6" width="11.8" height="8.7" fill="none" stroke="#666" stroke-width="1"/><path d="M1492 8.8 H1503.5" stroke="#666" stroke-width="1"/><path d="M1497.6 14.8 V10.6 M1495.6 12.4 L1497.6 10.4 L1499.6 12.4" stroke="#666" stroke-width="1" fill="none"/><rect x="1522" y="11.8" width="9" height="2" fill="#666"/><rect x="1551.6" y="9.4" width="7" height="5.8" fill="none" stroke="#666" stroke-width="1.1"/><path d="M1553.6 9.2 V6.6 H1560.6 V12.6 H1558.8" stroke="#666" stroke-width="1.1" fill="none"/><path d="M1580.5 6.5 L1589.5 15.5 M1589.5 6.5 L1580.5 15.5" stroke="#666" stroke-width="2"/><path d="M14 58 H28 L35 65 V86 H14 Z" fill="#4a7ebb"/><path d="M28 58 V65 H35" fill="#fff" stroke="#fff" stroke-width="0.6"/><path d="M28.8 58.4 L34.6 64.2 H28.8Z" fill="#4a7ebb"/><path d="M17.5 69 H31.5" stroke="#fff" stroke-width="1.4" stroke-dasharray="1 0.6"/><path d="M18.5 73.2 H30.5 M22 76.5 H27.5" stroke="#fff" stroke-width="1"/><path d="M57.5 58.5 H70 L77.5 66 V85.5 H57.5 Z" fill="#fff" stroke="#6d6d6d" stroke-width="1"/><path d="M70 58.5 V66 H77.5" fill="none" stroke="#6d6d6d" stroke-width="1"/><path d="M98.5 58 V69.5 H118.5 V58 M98.5 86 V74.5 H118.5 V86" fill="none" stroke="#6d6d6d" stroke-width="1"/><path d="M94 67.5 L98 71.6 L94 75.5 Z" fill="#4a7ebb"/><rect x="146.5" y="59.5" width="27" height="24" fill="#fff" stroke="#6d6d6d" stroke-width="1"/><rect x="146" y="59" width="28" height="4.5" fill="#6d6d6d"/><path d="M146.5 68.5 H173.5 M146.5 73.5 H173.5 M146.5 78.5 H173.5 M155.5 63 V83.5 M164.5 63 V83.5" stroke="#8a8a8a" stroke-width="0.8"/><rect x="199.5" y="58.5" width="27" height="26.5" fill="#fff" stroke="#6d6d6d" stroke-width="1"/><path d="M200.5 84.5 L200.5 80 L208.5 72 L215 78 L215 84.5 Z" fill="#bed3e9"/><circle cx="220" cy="64.8" r="2.8" fill="#e9c176"/><rect x="213" y="73" width="15.6" height="11.3" fill="#fff" stroke="#3d7ab8" stroke-width="1.8"/><path d="M218 87.5 H224 M221 85 V87.5" stroke="#3d7ab8" stroke-width="1.2"/><rect x="246.5" y="58.5" width="27" height="26.5" fill="#fff" stroke="#6d6d6d" stroke-width="1"/><path d="M247.5 84.5 L247.5 80 L255.5 72 L262 78 L262 84.5 Z" fill="#bed3e9"/><circle cx="267" cy="64.8" r="2.8" fill="#e9c176"/><circle cx="268.3" cy="80.2" r="7.6" fill="#fff"/><circle cx="268.3" cy="80.2" r="6.8" fill="none" stroke="#3d7ab8" stroke-width="1.3"/><ellipse cx="268.3" cy="80.2" rx="3" ry="6.8" fill="none" stroke="#3d7ab8" stroke-width="1.1"/><path d="M261.5 80.2 H275 M262.6 76.8 H274 M262.6 83.6 H274" stroke="#3d7ab8" stroke-width="1"/><circle cx="309.3" cy="66.8" r="9.3" fill="none" stroke="#3d7ab8" stroke-width="1.2"/><rect x="290.5" y="61.5" width="16" height="15.5" fill="#fff" stroke="#3d7ab8" stroke-width="1.2"/><path d="M304.3 68.3 L313.3 77.3 L304.3 86.3 L295.3 77.3 Z" fill="#fff" stroke="#3d7ab8" stroke-width="1.2"/><path d="M337.3 59.8 H358 L362.5 68.3 L358 76.9 H337.3 L341.5 68.3 Z" fill="#72a894"/><rect x="347.5" y="68.5" width="19" height="14" fill="#fff" stroke="#6d6d6d" stroke-width="1"/><path d="M351 72.5 H352 M353.5 72.5 H363 M351 75.5 H352 M353.5 75.5 H363 M351 78.5 H352 M353.5 78.5 H363" stroke="#8a8a8a" stroke-width="0.8"/><rect x="387" y="67" width="6.8" height="18" fill="#4a7ebb"/><rect x="395" y="59" width="7" height="26" fill="#e9c176"/><rect x="403.2" y="64" width="6.8" height="21" fill="#7b7b7b"/><rect x="439.5" y="59.5" width="22" height="22" fill="none" stroke="#9a9a9a" stroke-width="0.9" stroke-dasharray="1.6 1.2"/><path d="M437 77.5 Q437 76 438.5 76 H440.5 L442 74 H447.5 L449 76 H451.5 Q453 76 453 77.5 V85.7 H437 Z" fill="#7a7a7a"/><circle cx="445" cy="80.8" r="2.9" fill="#fff"/><circle cx="445" cy="80.8" r="1.7" fill="#7a7a7a"/><path d="M457.5 82 H465 M461.2 78.2 V85.8" stroke="#3d7ab8" stroke-width="1.7"/><path d="M496 69.6 L509.8 67.2 V79.6 L496 77.8 Z" fill="#e8431b"/><path d="M499.3 69 V66.2 Q499.3 64.5 501 64.5 Q502.6 64.5 502.6 66.2 V68.2 M502.6 67.6 V66.6 Q502.6 65 504.2 65 Q505.8 65 505.8 66.8 V67.8" stroke="#e8431b" stroke-width="1.1" fill="none"/><path d="M504 96.2 L509.8 98.8 V106.4 L503.6 109.7 L498.2 107.2 V98.8 Z" fill="#1a73c8"/><circle cx="498.9" cy="106.4" r="3.8" fill="#fff"/><circle cx="498.9" cy="106.4" r="2.9" fill="#1a73c8"/><text x="595" y="80.6" font-family="Liberation Serif" font-size="25" fill="#111" stroke="#111" stroke-width="0.45" textLength="27.6" lengthAdjust="spacingAndGlyphs">W</text><rect x="656.8" y="60.6" width="22.6" height="21.5" fill="#fff" stroke="#6d6d6d" stroke-width="1"/><rect x="656.3" y="60.1" width="23.6" height="3.3" fill="#6d6d6d"/><rect x="656.3" y="79.3" width="17" height="3.3" fill="#6d6d6d"/><path d="M658.3 61.8 H678" stroke="#fff" stroke-width="1.2" stroke-dasharray="1.6 1.6"/><path d="M658.3 81 H672" stroke="#fff" stroke-width="1.2" stroke-dasharray="1.6 1.6"/><circle cx="676.6" cy="80.2" r="8.3" fill="#fff"/><circle cx="676.6" cy="80.2" r="7" fill="none" stroke="#3d7ab8" stroke-width="1.3"/><ellipse cx="676.6" cy="80.2" rx="3" ry="7" fill="none" stroke="#3d7ab8" stroke-width="1.1"/><path d="M669.6 80.2 H683.6 M670.6 76.8 H682.6 M670.6 83.6 H682.6" stroke="#3d7ab8" stroke-width="1"/><circle cx="723.5" cy="70.4" r="11.8" fill="none" stroke="#777" stroke-width="1"/><ellipse cx="723.5" cy="70.4" rx="5" ry="11.8" fill="none" stroke="#777" stroke-width="1"/><path d="M723.5 58.6 V82.2 M712.5 66.5 H734.5 M712.5 74.5 H734.5" stroke="#777" stroke-width="1"/><rect x="719" y="77" width="25" height="12" fill="#fff"/><rect x="722.6" y="79.4" width="11" height="7.6" rx="3.8" fill="none" stroke="#3d7ab8" stroke-width="2.3"/><rect x="730.6" y="79.4" width="11" height="7.6" rx="3.8" fill="none" stroke="#3d7ab8" stroke-width="2.3"/><path d="M772.8 58.7 H785.8 L792.3 65.2 V85 H772.8 Z" fill="#fff" stroke="#6d6d6d" stroke-width="1"/><path d="M785.8 58.7 V65.2 H792.3" fill="none" stroke="#6d6d6d" stroke-width="1"/><rect x="784.5" y="67.6" width="1.4" height="14" fill="#6d6d6d"/><path d="M787.2 67.4 L796.3 72.4 L787.2 77.4 Z" fill="#3d7ab8"/><path d="M836.5 82.5 V85.5 H853.5 V62.5 H844.5" fill="none" stroke="#6d6d6d" stroke-width="1"/><rect x="825.5" y="58.5" width="17" height="23" fill="#fff" stroke="#6d6d6d" stroke-width="1"/><rect x="832" y="66.1" width="9" height="2.7" fill="#d9532f"/><rect x="844" y="79.3" width="7" height="2.7" fill="#d9532f"/><path d="M844.3 67.8 Q848.4 69.2 848.2 75.2" stroke="#777" stroke-width="2" fill="none"/><path d="M844.9 72.2 L848.2 76.2 L851.5 72.2" stroke="#777" stroke-width="2" fill="none"/><path d="M902.5 62.5 H918.5 V75.5 L911.5 82.5 H891.5 V69" fill="none" stroke="#6d6d6d" stroke-width="1"/><path d="M911.5 82.5 V75.5 H918.5" fill="none" stroke="#6d6d6d" stroke-width="1"/><circle cx="894.9" cy="62" r="2.3" fill="none" stroke="#e8c372" stroke-width="1.5"/><path d="M898.30 62.00 L901.10 62.00 M897.30 64.40 L899.28 66.38 M894.90 65.40 L894.90 68.20 M892.50 64.40 L890.52 66.38 M891.50 62.00 L888.70 62.00 M892.50 59.60 L890.52 57.62 M894.90 58.60 L894.90 55.80 M897.30 59.60 L899.28 57.62" stroke="#e8c372" stroke-width="1.5"/><path d="M955.5 58.5 H969 L975.5 65 V85.5 H955.5 Z" fill="#fff" stroke="#6d6d6d" stroke-width="1"/><path d="M969 58.5 V65 H975.5" fill="none" stroke="#6d6d6d" stroke-width="1"/><rect x="958" y="61.5" width="8" height="4.5" fill="#e9c176"/><path d="M997.5 58.5 H1011 L1017.5 65 V85.5 H997.5 Z" fill="#fff" stroke="#6d6d6d" stroke-width="1"/><path d="M1011 58.5 V65 H1017.5" fill="none" stroke="#6d6d6d" stroke-width="1"/><rect x="1000" y="78" width="15" height="4.5" fill="#e9c176"/><path d="M1046.5 58.5 H1060 L1066.5 65 V85.5 H1046.5 Z" fill="#fff" stroke="#6d6d6d" stroke-width="1"/><path d="M1060 58.5 V65 H1066.5" fill="none" stroke="#6d6d6d" stroke-width="1"/><text x="1051.3" y="82.4" font-family="Liberation Sans" font-weight="bold" font-size="13.5" fill="#3d7ab8">#</text><rect x="1102.7" y="59.9" width="26.6" height="23.4" fill="#fff" stroke="#6d6d6d" stroke-width="1"/><text x="1105.6" y="72.2" font-family="Liberation Sans" font-size="11.8" fill="#3d7ab8">A</text><path d="M1114 63.5 H1126 M1114 66 H1126 M1114 68.5 H1126 M1114 71 H1126 M1105.5 74 H1126 M1105.5 76.8 H1126 M1105.5 79.5 H1126" stroke="#9a9a9a" stroke-width="0.8"/><rect x="1146.8" y="58.9" width="21.5" height="26.2" fill="#fff" stroke="#6d6d6d" stroke-width="1"/><rect x="1149" y="61.4" width="17" height="4.2" fill="#e9c176"/><rect x="1149" y="67.8" width="5.8" height="7.5" fill="#a8a8a8"/><path d="M1156.5 68.5 H1166 M1156.5 71.5 H1166 M1156.5 74.5 H1166" stroke="#9a9a9a" stroke-width="1"/><rect x="1149" y="78" width="17" height="4.5" fill="#3d7ab8"/><path d="M1193.2 76.2 L1210 61 L1208.6 83.8" stroke="#3d7ab8" stroke-width="3.2" fill="none" stroke-linejoin="miter"/><path d="M1200.8 71.4 L1208.8 74.6" stroke="#3d7ab8" stroke-width="2.8"/><path d="M1236.6 74 L1242 58 H1246 L1251.3 74 H1248 L1246.8 70.2 H1241.2 L1240 74 Z M1242 67.4 H1246 L1244 61 Z" fill="#3d7ab8" fill-rule="evenodd"/><path d="M1253 58.5 H1264 M1253 61.5 H1264 M1253 64.5 H1264 M1253 67.5 H1264 M1253 70.5 H1264 M1253 73.5 H1264 M1236 76.5 H1264 M1236 79.5 H1264 M1236 82.5 H1264 M1236 85.5 H1264" stroke="#a4a4a4" stroke-width="1"/><path d="M1274.5 56.5 H1282.5 L1286.5 60.5 V71.5 H1274.5 Z" fill="#fff" stroke="#6d6d6d" stroke-width="1"/><path d="M1282.5 56.5 V60.5 H1286.5" fill="none" stroke="#6d6d6d" stroke-width="1"/><path d="M1281 68.6 L1288.6 61" stroke="#fff" stroke-width="4"/><path d="M1281 68.6 L1288.6 61" stroke="#3d7ab8" stroke-width="2.2" stroke-linecap="round"/><path d="M1279.4 70.4 L1280 67.8 L1282 69.6Z" fill="#3d7ab8"/><rect x="1274.5" y="79.5" width="12" height="11.5" fill="#fff" stroke="#6d6d6d" stroke-width="1" stroke-dasharray="1.2 0.8"/><rect x="1274" y="79" width="13" height="2" fill="#6d6d6d"/><rect x="1277.8" y="84.3" width="3" height="3" fill="none" stroke="#e07030" stroke-width="1.1"/><circle cx="1285.6" cy="90.4" r="4.4" fill="#fff" stroke="#3d7ab8" stroke-width="1.1"/><path d="M1285.6 87.6 V90.6 H1287.8" stroke="#3d7ab8" stroke-width="0.9" fill="none"/><rect x="1274.6" y="103.6" width="14.8" height="12.6" fill="#fff" stroke="#3d7ab8" stroke-width="1.1"/><rect x="1274" y="103" width="16" height="3" fill="#3d7ab8"/><path d="M1410.4 66.5 Q1411 60.3 1417 60.3 H1435.2 V64.6 H1416.5 Q1413.6 64.6 1412.4 67.2 Z" fill="#3d7ab8"/><path d="M1419.4 63 Q1419.4 75 1413.4 81.6" stroke="#3d7ab8" stroke-width="3.6" stroke-linecap="round" fill="none"/><path d="M1428.4 63 V77.6 Q1428.4 82.2 1431.8 82.2 Q1433.8 82.2 1434.8 80.2" stroke="#3d7ab8" stroke-width="3.4" stroke-linecap="round" fill="none"/><text x="1456.4" y="84" font-family="Liberation Serif" font-weight="bold" font-size="35" fill="#3d7ab8" textLength="27" lengthAdjust="spacingAndGlyphs">Ω</text><path d="M1581.5 136.6 L1585.5 132.4 L1589.5 136.6" stroke="#666" stroke-width="1.6" fill="none"/></svg>
<div class=b style="left:1584px;top:145px;width:15px;height:15px;background:#fff;border:1px solid #ababab;box-sizing:border-box"></div>
<svg class=b style="left:1584px;top:145px" width="15" height="15"><path d="M4 9.6 H11 L7.5 5.8 Z" fill="#606060"/></svg>
<div class=b style="left:1584px;top:822px;width:15px;height:15px;background:#fff;border:1px solid #ababab;box-sizing:border-box"></div>
<svg class=b style="left:1584px;top:822px" width="15" height="15"><path d="M4 5.6 H11 L7.5 9.4 Z" fill="#606060"/></svg>
<div class=b style="left:1584px;top:666px;width:15px;height:41px;background:#fff;border:1px solid #a5a5a5;box-sizing:border-box"></div>
<div class=b style="left:0px;top:838px;width:1600px;height:22px;background:#2b579a;"></div>
<div class=b style="left:1346px;top:838px;width:38px;height:22px;background:#1e4a87;"></div>
<div class=t style="left:7.50px;top:844.00px;font-size:11.5px;color:#ffffff;transform:scaleX(0.8889);transform-origin:0 0;">PAGE 40 OF 51</div>
<div class=t style="left:100.00px;top:844.00px;font-size:11.5px;color:#ffffff;transform:scaleX(0.9278);transform-origin:0 0;">8814 WORDS</div>
<div class=t style="left:219.40px;top:844.00px;font-size:11.5px;color:#ffffff;transform:scaleX(0.8400);transform-origin:0 0;">ENGLISH (UNITED STATES)</div>
<div class=t style="left:1564.00px;top:844.00px;font-size:11.5px;color:#ffffff;transform:scaleX(0.8950);transform-origin:0 0;">60%</div>
<svg class=b style="left:0;top:0" width="1600" height="860"><path d="M194.5 844 L193 842.5 H188.5 V852.5 H193 L194.5 854 L196 852.5 H200.5 V849.2 M194.5 844 L196 842.5 H199.6" fill="none" stroke="#fff" stroke-width="1.1"/><path d="M194.5 844 V853.8" stroke="#fff" stroke-width="1.1"/><path d="M193 853.4 L194.5 855.3 L196 853.4Z" fill="#fff"/><path d="M197.6 850.6 L202.6 845.6" stroke="#fff" stroke-width="2.3"/><path d="M196.6 851.8 L197.2 849.8 L198.6 851.2Z" fill="#fff"/><path d="M1320.6 842.3 H1326.6 L1326.6 854.3 H1320.6 Z M1326.6 842.3 H1332.6 V854.3 H1326.6" fill="none" stroke="#fff" stroke-width="1.1"/><path d="M1322 845 H1331.3 M1322 847 H1331.3 M1322 849 H1331.3 M1322 851 H1331.3" stroke="#fff" stroke-width="0.9"/><path d="M1326.6 842 V855.6" stroke="#fff" stroke-width="1.4"/><rect x="1358.6" y="842.3" width="13" height="12.2" fill="none" stroke="#fff" stroke-width="1.1"/><path d="M1360.6 844.8 H1369.6 M1360.6 846.8 H1369.6 M1360.6 848.8 H1369.6 M1360.6 850.8 H1369.6 M1360.6 852.6 H1369.6" stroke="#fff" stroke-width="0.9"/><path d="M1402 852.6 H1396.6 V842.3 H1407.8 V846" fill="none" stroke="#fff" stroke-width="1.1"/><path d="M1398.2 845 H1405 M1398.2 847.2 H1403 M1398.2 849.4 H1401" stroke="#fff" stroke-width="0.9"/><circle cx="1405.8" cy="850.6" r="4.3" fill="#fff"/><path d="M1403.6 848.2 Q1405 849.6 1404.6 851 Q1406.6 851.6 1406.2 853.8 M1407.2 847.6 Q1407.4 849.2 1409 849.4" stroke="#2b579a" stroke-width="1" fill="none"/><rect x="1427" y="847.8" width="6" height="2.4" fill="#fff"/><rect x="1437" y="848.6" width="99.6" height="1" fill="#fff"/><rect x="1463.8" y="842.8" width="4" height="11.2" fill="#fff"/><rect x="1487" y="846" width="1" height="5.6" fill="#fff"/><path d="M1541 849 H1549 M1545 845 V853" stroke="#fff" stroke-width="2.2"/></svg>
</div></body></html>
